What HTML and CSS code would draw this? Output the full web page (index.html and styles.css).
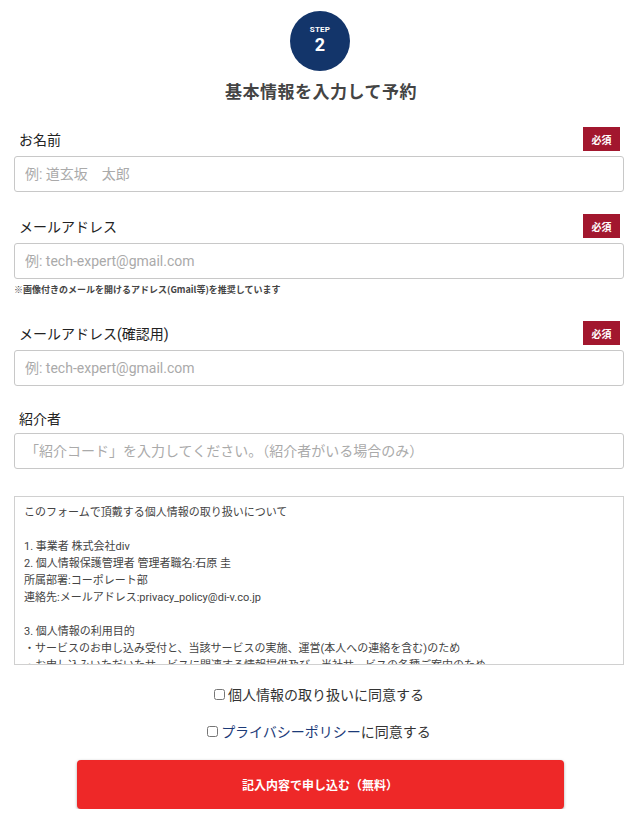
FILE: index.html
```html
<!DOCTYPE html>
<html lang="ja">
<head>
<meta charset="utf-8">
<title>基本情報を入力して予約</title>
<link rel="stylesheet" href="styles.css">
</head>
<body>
<main class="page">
  <header class="head">
    <div class="step">
      <span class="step-label">STEP</span>
      <span class="step-num">2</span>
    </div>
    <h1 class="title">基本情報を入力して予約</h1>
  </header>

  <form class="form">
    <div class="field field--first">
      <div class="field-row">
        <label class="field-label">お名前</label>
        <span class="badge">必須</span>
      </div>
      <input class="input" type="text" placeholder="例: 道玄坂　太郎">
    </div>

    <div class="field">
      <div class="field-row">
        <label class="field-label">メールアドレス</label>
        <span class="badge">必須</span>
      </div>
      <input class="input" type="text" placeholder="例: tech-expert@gmail.com">
      <p class="note">※画像付きのメールを開けるアドレス(Gmail等)を推奨しています</p>
    </div>

    <div class="field field--after-note">
      <div class="field-row">
        <label class="field-label">メールアドレス(確認用)</label>
        <span class="badge">必須</span>
      </div>
      <input class="input" type="text" placeholder="例: tech-expert@gmail.com">
    </div>

    <div class="field field--plain">
      <div class="field-row">
        <label class="field-label">紹介者</label>
      </div>
      <input class="input" type="text" placeholder="「紹介コード」を入力してください。（紹介者がいる場合のみ）">
    </div>

    <div class="policy">
      <p>このフォームで頂戴する個人情報の取り扱いについて</p>
      <p>&nbsp;</p>
      <p>1. 事業者 株式会社div</p>
      <p>2. 個人情報保護管理者 管理者職名:石原 圭</p>
      <p>所属部署:コーポレート部</p>
      <p>連絡先:メールアドレス:privacy_policy@di-v.co.jp</p>
      <p>&nbsp;</p>
      <p>3. 個人情報の利用目的</p>
      <p>・サービスのお申し込み受付と、当該サービスの実施、運営(本人への連絡を含む)のため</p>
      <p>・お申し込みいただいたサービスに関連する情報提供及び、当社サービスの各種ご案内のため</p>
      <p>・当社サービスの改善及び新サービスの開発のため</p>
    </div>

    <div class="agree agree--first">
      <label class="check"><input type="checkbox"><span>個人情報の取り扱いに同意する</span></label>
    </div>
    <div class="agree">
      <label class="check"><input type="checkbox"><span><a class="link" href="#">プライバシーポリシー</a>に同意する</span></label>
    </div>

    <div class="submit-wrap">
      <button class="submit" type="button">記入内容で申し込む（無料）</button>
    </div>
  </form>
</main>
</body>
</html>
```

FILE: styles.css
```css
* {
  box-sizing: border-box;
}

html, body {
  margin: 0;
  padding: 0;
  background: #ffffff;
}

body {
  font-family: "Roboto", "Noto Sans CJK JP", sans-serif;
  color: #333333;
}

.page {
  padding: 11px 16px 0 14px;
}

.head {
  display: flex;
  flex-direction: column;
  align-items: center;
}

.step {
  width: 60px;
  height: 60px;
  border-radius: 50%;
  background: #13356a;
  color: #ffffff;
  display: flex;
  flex-direction: column;
  align-items: center;
  justify-content: center;
  margin-left: 2px;
}

.step-label {
  font-family: "Roboto", sans-serif;
  font-size: 8px;
  font-weight: 700;
  line-height: 10px;
  letter-spacing: 0.2px;
  margin-top: -2px;
}

.step-num {
  font-family: "Roboto", sans-serif;
  font-size: 18px;
  font-weight: 700;
  line-height: 20px;
}

.title {
  margin: 8px 0 0 0;
  font-family: "Noto Sans CJK JP", sans-serif;
  font-size: 17px;
  font-weight: 700;
  line-height: 24px;
  color: #444444;
  letter-spacing: 0.5px;
  padding-left: 4px;
}

.form {
  display: flex;
  flex-direction: column;
}

.field {
  margin-top: 22px;
}

.field--first {
  margin-top: 24px;
}

.field--after-note {
  margin-top: 25px;
}

.field--plain {
  margin-top: 21px;
}

.field-row {
  display: flex;
  align-items: center;
  justify-content: space-between;
  height: 24px;
}

.field--plain .field-row {
  height: 22px;
}

.field-label {
  font-family: "Roboto", "Noto Sans CJK JP", sans-serif;
  font-size: 14px;
  font-weight: 400;
  color: #222222;
  padding-left: 5px;
}

.badge {
  width: 37px;
  height: 24px;
  background: #a2172e;
  color: #ffffff;
  font-family: "Noto Sans CJK JP", sans-serif;
  font-size: 10px;
  font-weight: 700;
  display: flex;
  align-items: center;
  justify-content: center;
  margin-right: 4px;
}

.input {
  display: block;
  width: 100%;
  height: 36px;
  margin-top: 5px;
  padding: 0 10px;
  border: 1px solid #c8c8c8;
  border-radius: 3px;
  background: #ffffff;
  font-family: "Roboto", "Noto Sans CJK JP", sans-serif;
  font-size: 14px;
  color: #333333;
  outline: none;
}

.field--plain .input {
  margin-top: 4px;
}

.input::placeholder {
  color: #aaaaaa;
}

.note {
  margin: 5px 0 0 0;
  font-family: "Noto Sans CJK JP", sans-serif;
  font-size: 9px;
  font-weight: 700;
  line-height: 12px;
  color: #444444;
}

.policy {
  margin-top: 27px;
  height: 169px;
  overflow: hidden;
  border: 1px solid #d0d0d0;
  padding: 7px 10px 0 9px;
  font-family: "Roboto", "Noto Sans CJK JP", sans-serif;
  font-size: 11px;
  line-height: 17px;
  color: #444444;
}

.policy p {
  margin: 0;
  white-space: nowrap;
}

.agree {
  display: flex;
  justify-content: center;
  margin-top: 17px;
}

.agree--first {
  margin-top: 19px;
}

.check {
  display: flex;
  align-items: center;
  font-family: "Noto Sans CJK JP", sans-serif;
  font-size: 14px;
  line-height: 20px;
  color: #333333;
}

.check input {
  width: 11px;
  height: 11px;
  margin: 0 3px 0 0;
}

.link {
  color: #1c3a78;
  text-decoration: none;
}

.submit-wrap {
  display: flex;
  justify-content: center;
  margin-top: 19px;
  padding-left: 2px;
}

.submit {
  width: 487px;
  height: 49px;
  border: none;
  border-radius: 4px;
  background: #ee2828;
  color: #ffffff;
  font-family: "Noto Sans CJK JP", sans-serif;
  font-size: 12px;
  font-weight: 700;
  box-shadow: 0 1px 3px rgba(0, 0, 0, 0.35);
  cursor: pointer;
}
```
